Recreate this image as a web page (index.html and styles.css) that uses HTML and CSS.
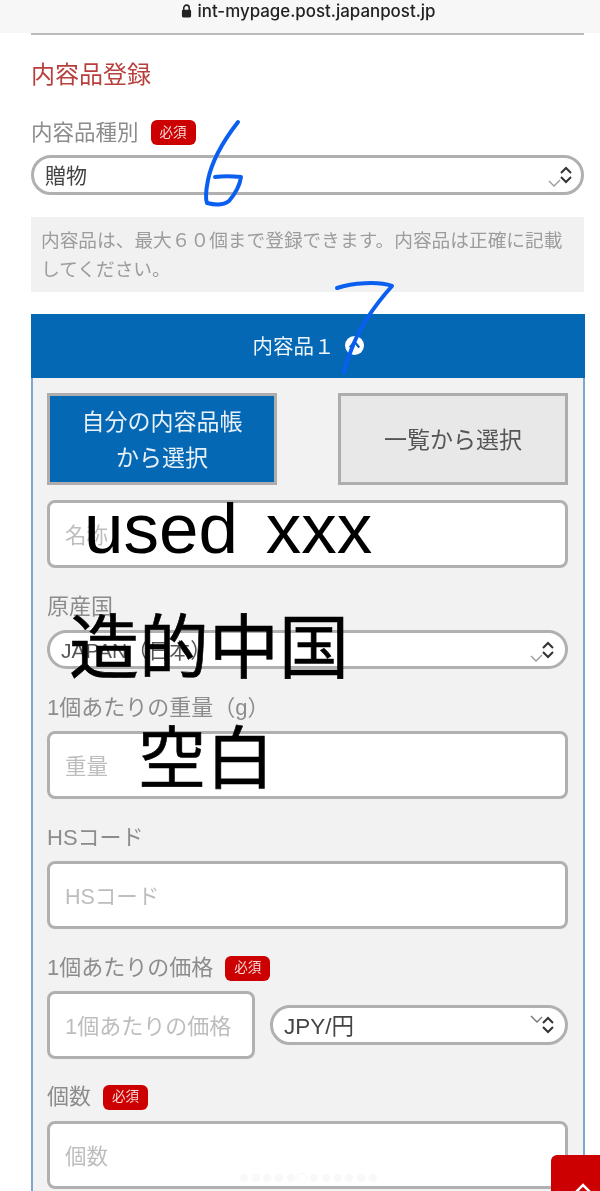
FILE: index.html
```html
<!DOCTYPE html>
<html lang="ja">
<head>
<meta charset="utf-8">
<title>内容品登録</title>
<link rel="stylesheet" href="styles.css">
</head>
<body>
<div class="page">
  <header class="urlbar">
    <svg class="lock" width="11" height="16" viewBox="0 0 12 16"><path d="M3 7V4.600a3 3 0 0 1 6 0V7" fill="none" stroke="#222" stroke-width="1.700"/><rect x="1" y="6.500" width="10" height="8.500" rx="1.500" fill="#222"/></svg>
    <span>int-mypage.post.japanpost.jp</span>
  </header>
  <main class="main">
    <h1 class="title">内容品登録</h1>
    <div class="label label-top">内容品種別<span class="badge">必須</span></div>
    <div class="select select-top">
      <span>贈物</span>
      <svg class="chev" width="34" height="28" viewBox="0 0 34 28"><path d="M3 20l5 5 6-6" fill="none" stroke="#999" stroke-width="1.300"/><path d="M15 12l5-5 5 5M15 16l5 5 5-5" fill="none" stroke="#333" stroke-width="2"/></svg>
    </div>
    <p class="note">内容品は、最大６０個まで登録できます。内容品は正確に記載してください。</p>
    <section class="card">
      <div class="card-head">内容品１<svg class="help" width="19" height="19" viewBox="0 0 20 20"><circle cx="10" cy="10" r="10" fill="#fff"/><path d="M5 12l5-6 5 6" fill="none" stroke="#0468b5" stroke-width="2.400"/></svg></div>
      <div class="card-body">
        <div class="btn-row">
          <div class="btn btn-blue">自分の内容品帳<br>から選択</div>
          <div class="btn btn-grey">一覧から選択</div>
        </div>
        <div class="input input-first">名称</div>
        <div class="label">原産国</div>
        <div class="select select-mid">
          <span class="sel-small">JAPAN（日本）</span>
          <svg class="chev" width="34" height="28" viewBox="0 0 34 28"><path d="M3 20l5 5 6-6" fill="none" stroke="#999" stroke-width="1.300"/><path d="M15 12l5-5 5 5M15 16l5 5 5-5" fill="none" stroke="#333" stroke-width="2"/></svg>
        </div>
        <div class="label">1個あたりの重量（g）</div>
        <div class="input">重量</div>
        <div class="label">HSコード</div>
        <div class="input">HSコード</div>
        <div class="label">1個あたりの価格<span class="badge">必須</span></div>
        <div class="price-row">
          <div class="input input-price">1個あたりの価格</div>
          <div class="select select-cur">
            <span>JPY/円</span>
            <svg class="chev" width="34" height="28" viewBox="0 0 34 28"><path d="M3 5l6 6 5-5" fill="none" stroke="#777" stroke-width="1.400"/><path d="M15 12l5-5 5 5M15 16l5 5 5-5" fill="none" stroke="#333" stroke-width="2"/></svg>
          </div>
        </div>
        <div class="label label-count">個数<span class="badge">必須</span></div>
        <div class="input input-count">個数</div>
      </div>
    </section>
  </main>

  <div class="dots"><i></i><i></i><i></i><i></i><i></i><i class="on"></i><i></i><i></i><i></i><i></i><i></i><i></i></div>
  <div class="to-top"><svg width="24" height="14" viewBox="0 0 24 14"><path d="M4 13l8-8 8 8" fill="none" stroke="#fff" stroke-width="2.500"/></svg></div>

  <div class="mark mark-used">used xxx</div>
  <div class="mark mark-china">造的中国</div>
  <div class="mark mark-blank">空白</div>
  <svg class="ink" width="600" height="400" viewBox="0 0 600 400">
    <path d="M238 122C224 140 212 160 208 180C206 190 205 198 207 203C215 205 224 205 229 201C235 194 240 184 241 177C232 176 222 176 215 177" />
    <path d="M337 288C352 283 378 281 392 286C376 304 360 326 352 348C348 358 345 366 344 372" />
  </svg>
</div>
</body>
</html>
```
FILE: styles.css
```css
* { box-sizing: border-box; }
html, body { margin: 0; padding: 0; }
body { font-family: "Liberation Sans", "Noto Sans CJK JP", sans-serif; background: #fff; }
.page { position: relative; width: 600px; height: 1191px; overflow: hidden; background: #fff; filter: blur(0.45px); }

.urlbar { height: 33px; background: #f7f7f7; display: flex; align-items: center; justify-content: center; gap: 6px; padding-bottom: 11px; padding-left: 16px; font-family: "Inter", "Liberation Sans", sans-serif; font-size: 16.900px; font-weight: 500; color: #222; }
.lock { flex: none; }

.main { width: 553px; margin-left: 31px; border-top: 2px solid #bbb; }
.title { margin: 25px 0 0; height: 30px; line-height: 30px; font-size: 24px; font-weight: 400; color: #b8403c; }

.label { margin-top: 27px; height: 24px; line-height: 24px; font-size: 22px; color: #8c8c8c; display: flex; align-items: center; white-space: nowrap; }
.label-top { margin-top: 30px; height: 25px; font-size: 21.500px; }
.label-count { margin-top: 26px; }
.badge { display: inline-flex; align-items: center; justify-content: center; width: 45px; height: 25px; margin-left: 12px; border-radius: 6px; background: #cc0000; color: #f6dcdc; font-size: 13.500px; }

.select { margin-top: 11px; height: 39px; border: 3px solid #b0b0b0; border-radius: 20px; background: #fff; display: flex; align-items: center; justify-content: space-between; padding: 0 0 2px 11px; font-size: 21px; color: #444; }
.select-top { margin-top: 10px; height: 40px; }
.sel-small { font-size: 21px; color: #555; }
.chev { flex: none; margin-right: 1px; margin-top: 2px; }
.select-mid .chev, .select-cur .chev { margin-right: 3px; }
.select-cur { flex: 1; margin-top: 0; height: 40px; font-size: 22.500px; }

.note { margin: 22px 0 0; height: 75px; padding: 9px 10px; background: #f1f1f1; font-size: 18.700px; line-height: 29px; color: #9c9c9c; }

.card { margin-top: 22px; width: 554px; border: 2px solid #7fa6cc; border-top: 0; background: #f2f2f2; }
.card-head { height: 64px; margin: 0 -2px; background: #0468b5; color: #eef4fa; font-size: 20.500px; display: flex; align-items: center; justify-content: center; gap: 10px; padding-bottom: 2px; }
.help { flex: none; margin-top: 1px; }
.card-body { padding: 15px 15px 40px 14px; }

.btn-row { display: flex; justify-content: space-between; }
.btn { width: 230px; height: 92px; padding-top: 2px; border: 3px solid #adadad; display: flex; align-items: center; justify-content: center; text-align: center; font-size: 23px; line-height: 36px; }
.btn-blue { background: #0468b5; color: #e8f0f8; }
.btn-grey { background: #e8e8e8; color: #555; }

.input { margin-top: 11px; height: 68px; border: 3px solid #b0b0b0; border-radius: 8px; background: #fff; display: flex; align-items: center; padding: 0 0 2px 15px; font-size: 21.500px; color: #bdbdbd; }
.input-first { margin-top: 15px; }
.input-count { margin-top: 12px; }
.price-row { margin-top: 11px; display: flex; align-items: center; gap: 15px; }
.input-price { margin-top: 0; width: 208px; flex: none; font-size: 22px; white-space: nowrap; }

.dots { position: absolute; left: 240px; top: 1174px; display: flex; gap: 3.700px; }
.dots i { width: 8px; height: 8px; border-radius: 50%; background: #f9f9f9; }
.dots i.on { background: #fff; box-shadow: 0 0 0 1px #f7f7f7; }
.to-top { position: absolute; left: 551px; top: 1155px; width: 60px; height: 50px; background: #cc0000; border-radius: 6px 0 0 0; padding: 25px 0 0 20px; }
.to-top svg { display: block; }

.mark { position: absolute; color: #000; white-space: nowrap; font-family: "Liberation Sans", "Noto Sans CJK SC", sans-serif; }
.mark-used { left: 84px; top: 488px; font-size: 71px; line-height: 82px; word-spacing: 8px; }
.mark-china { left: 69px; top: 607px; font-size: 70px; line-height: 84px; -webkit-text-stroke: 0.6px #000; }
.mark-blank { left: 138px; top: 718px; font-size: 68px; line-height: 82px; -webkit-text-stroke: 0.6px #000; }
.ink { position: absolute; left: 0; top: 0; fill: none; stroke: #0a5ff0; stroke-width: 4px; stroke-linecap: round; stroke-linejoin: round; }
```
